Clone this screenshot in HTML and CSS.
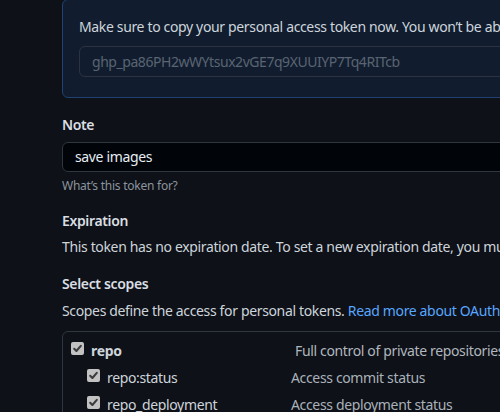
FILE: index.html
```html
<!DOCTYPE html>
<html lang="en">
<head>
<meta charset="utf-8">
<title>New personal access token</title>
<link rel="stylesheet" href="styles.css">
</head>
<body>
<main class="page">
  <section class="flash">
    <p class="flash-text">Make sure to copy your personal access token now. You won’t be able to see it again!</p>
    <div class="token-field">ghp_pa86PH2wWYtsux2vGE7q9XUUIYP7Tq4RITcb</div>
  </section>

  <div class="form-group">
    <label class="label">Note</label>
    <div class="input">save images</div>
    <p class="hint">What’s this token for?</p>
  </div>

  <div class="form-group expiration">
    <h3 class="label">Expiration</h3>
    <p class="text">This token has no expiration date. To set a new expiration date, you must regenerate the token.</p>
  </div>

  <div class="form-group scopes">
    <h3 class="label">Select scopes</h3>
    <p class="text scopes-desc">Scopes define the access for personal tokens. <a class="link" href="#">Read more about OAuth scopes.</a></p>
    <div class="scope-box">
      <div class="scope-row top">
        <div class="scope-name"><span class="check"><svg viewBox="0 0 13 13" width="13" height="13"><path d="M3.2 6.8 L5.4 9 L9.8 3.9" fill="none" stroke="#3c3c3c" stroke-width="2.1" stroke-linecap="round" stroke-linejoin="round"/></svg></span><strong>repo</strong></div>
        <div class="scope-desc">Full control of private repositories</div>
      </div>
      <div class="scope-row sub">
        <div class="scope-name"><span class="check"><svg viewBox="0 0 13 13" width="13" height="13"><path d="M3.2 6.8 L5.4 9 L9.8 3.9" fill="none" stroke="#3c3c3c" stroke-width="2.1" stroke-linecap="round" stroke-linejoin="round"/></svg></span><span>repo:status</span></div>
        <div class="scope-desc">Access commit status</div>
      </div>
      <div class="scope-row sub">
        <div class="scope-name"><span class="check"><svg viewBox="0 0 13 13" width="13" height="13"><path d="M3.2 6.8 L5.4 9 L9.8 3.9" fill="none" stroke="#3c3c3c" stroke-width="2.1" stroke-linecap="round" stroke-linejoin="round"/></svg></span><span>repo_deployment</span></div>
        <div class="scope-desc">Access deployment status</div>
      </div>
    </div>
  </div>
</main>
</body>
</html>
```

FILE: styles.css
```css
html, body {
  margin: 0;
  padding: 0;
  background: #0e1117;
  overflow: hidden;
}
body {
  font-family: "Noto Sans", "Open Sans", sans-serif;
  font-size: 14px;
  line-height: 21px;
  letter-spacing: -0.35px;
  color: #cdd4db;
}
.page {
  width: 760px;
  padding-left: 62px;
}
.flash {
  margin-top: -1px;
  background: #111d2f;
  border: 1px solid #1f4273;
  border-radius: 6px;
  padding: 16px 16px 20px 16px;
}
.flash-text {
  margin: 0;
  white-space: nowrap;
}
.token-field {
  margin-top: 9px;
  height: 29px;
  line-height: 29px;
  border: 1px solid #2b3340;
  border-radius: 6px;
  padding: 0 12px;
  color: #5a6472;
  letter-spacing: -0.45px;
  white-space: nowrap;
}
.form-group {
  margin-top: 16px;
}
.label {
  display: block;
  margin: 0;
  font-size: 14px;
  font-weight: 600;
  line-height: 21px;
  color: #d9dee3;
}
.input {
  margin-top: 7px;
  height: 28px;
  line-height: 28px;
  background: #010409;
  border: 1px solid #30363d;
  border-radius: 6px;
  padding: 0 12px;
  color: #e6edf3;
}
.hint {
  margin: 5px 0 0;
  font-size: 12px;
  line-height: 18px;
  letter-spacing: -0.25px;
  color: #8b949e;
}
.expiration {
  margin-top: 15px;
}
.text {
  margin: 5px 0 0;
  white-space: nowrap;
}
.scopes-desc {
  margin-top: 6px;
}
.link {
  color: #58a6ff;
  text-decoration: none;
}
.scope-box {
  margin-top: 10px;
  border: 1px solid #30363d;
  border-radius: 6px;
  padding: 5px 0 0 8px;
}
.scope-row {
  display: flex;
  align-items: center;
  height: 27px;
}
.scope-name {
  display: flex;
  align-items: center;
  gap: 7px;
}
.top .scope-name {
  width: 224px;
}
.sub .scope-name {
  width: 204px;
  margin-left: 16px;
}
.check {
  display: inline-flex;
  width: 13px;
  height: 13px;
  background: #c2c2c2;
  border-radius: 2px;
  flex: none;
  margin-top: -5px;
}
.scope-desc {
  color: #a9b1ba;
}
.top .scope-desc {
  color: #b0b7bf;
}
```
